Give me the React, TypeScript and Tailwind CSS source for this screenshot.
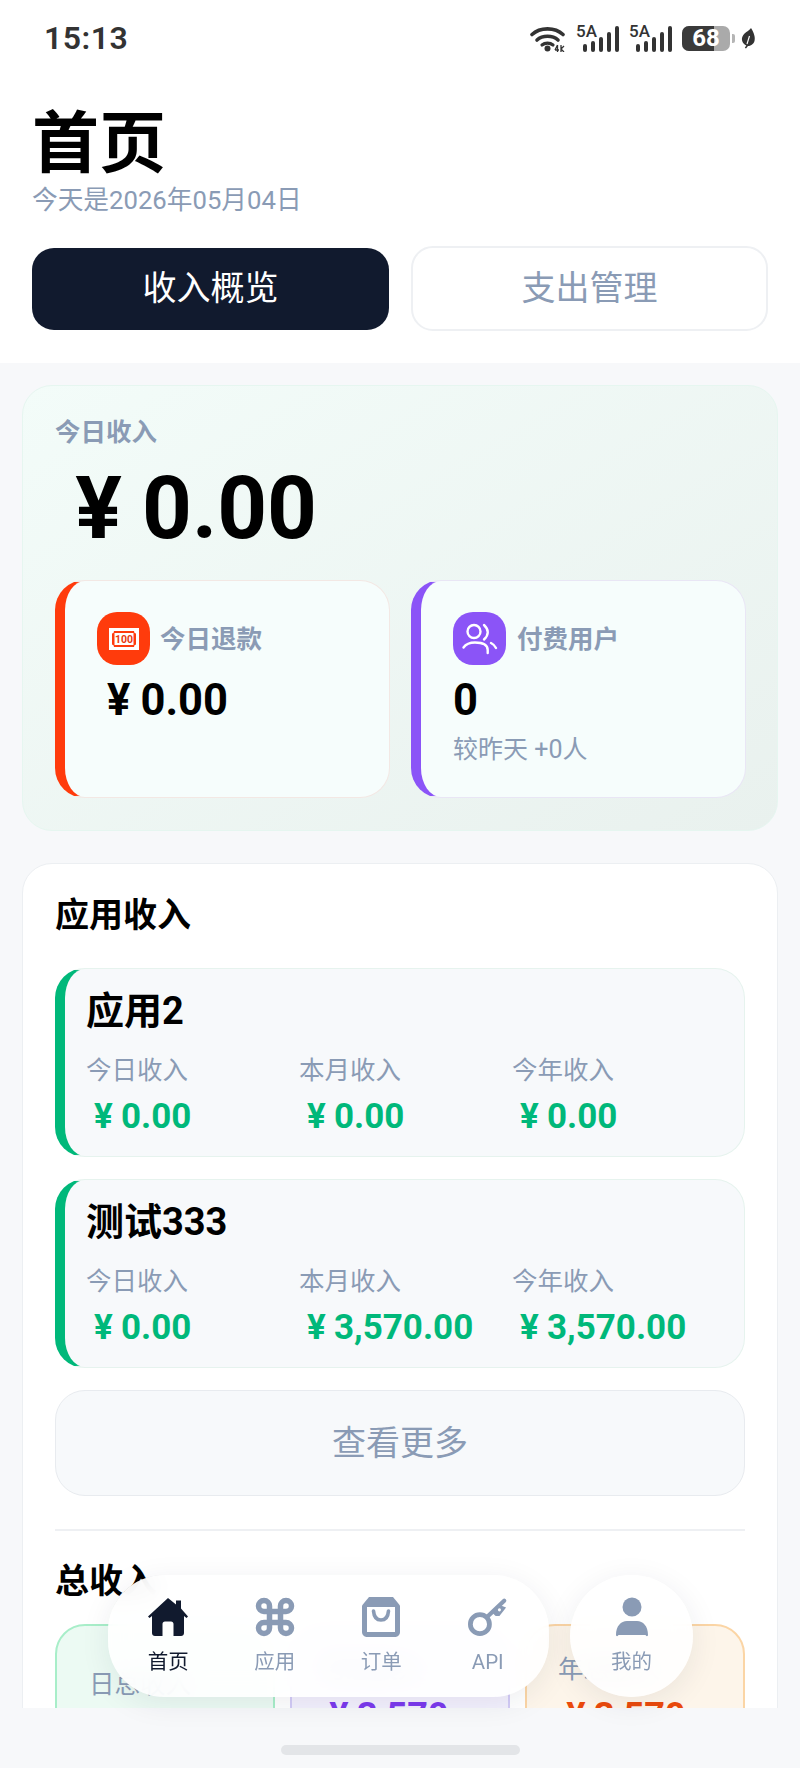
import { Command } from 'lucide-react';

const SLATE = "#8a9bb5";

const apps = [
  { name: "应用2", today: "0.00", month: "0.00", year: "0.00" },
  { name: "测试333", today: "0.00", month: "3,570.00", year: "3,570.00" },
];

function Yen() {
  return <span className="inline-block w-[1em] text-center">¥</span>;
}

function SignalBars() {
  return (
    <div className="flex items-end gap-[4px] h-[27px] ml-[6px]">
      <div className="w-[4px] h-[8px] rounded-full bg-[#333]" />
      <div className="w-[4px] h-[11px] rounded-full bg-[#333]" />
      <div className="w-[4px] h-[15px] rounded-full bg-[#333]" />
      <div className="w-[4px] h-[20px] rounded-full bg-[#333]" />
      <div className="w-[4px] h-[26px] rounded-full bg-[#333]" />
    </div>
  );
}

function Signal() {
  return (
    <div className="relative flex h-[27px] w-[43px] items-end justify-end">
      <span className="absolute left-0 top-[-2px] text-[17px] leading-[17px] font-medium text-[#333]">5A</span>
      <SignalBars />
    </div>
  );
}

function StatusBar() {
  return (
    <div className="h-[76px] flex items-center justify-between pl-[44px] pr-[44px] bg-white">
      <span className="text-[32px] leading-[40px] font-semibold text-[#333] tracking-[0.5px]">15:13</span>
      <div className="flex items-center h-[27px]">
        <svg width="36" height="27" viewBox="0 0 36 27" fill="none" className="mr-[10px]">
          <path d="M2 9.500C10 2 25 2 33 9.500" stroke="#333" strokeWidth="3.600" strokeLinecap="round" />
          <path d="M7 15C12.500 10 22.500 10 28 15" stroke="#333" strokeWidth="3.600" strokeLinecap="round" />
          <path d="M12 20C15 17.500 20 17.500 23 20" stroke="#333" strokeWidth="3.200" strokeLinecap="round" />
          <circle cx="17.500" cy="23.500" r="3" fill="#333" />
          <path d="M25 25H29M27.500 20L25 25M27.500 20V27M31 20V27M31 24L34 21M31 24L34 27" stroke="#333" strokeWidth="1.300" />
        </svg>
        <Signal />
        <div className="w-[10px]" />
        <Signal />
        <div className="relative ml-[10px] h-[25px] w-[48px] rounded-[7px] overflow-hidden bg-[#aaaaaa] flex items-center justify-center">
          <div className="absolute left-0 top-0 bottom-0 w-[32px] bg-[#3a3a3a]" />
          <span className="relative text-[24px] leading-[25px] font-bold text-white">68</span>
        </div>
        <div className="ml-[2px] w-[3px] h-[9px] rounded-r-[2px] bg-[#b5b5b5]" />
        <svg width="16" height="22" viewBox="0 0 16 22" className="ml-[5px]">
          <path d="M11 1C14 6 15.500 10 14.500 14C13.500 17.500 10.500 19 8 19L6 21.500L4.800 20.800L6.300 18.500C2.500 16.500 1 13 2.500 9.500C4 5.500 8.500 4.500 11 1Z" fill="#333" />
          <path d="M7 17L9.500 9" stroke="#fff" strokeWidth="1.200" />
        </svg>
      </div>
    </div>
  );
}

function BillIcon() {
  return (
    <svg width="30" height="22" viewBox="0 0 30 22">
      <rect width="30" height="22" fill="#fff" />
      <path d="M3 5.500Q5 5.500 5 3H25Q25 5.500 27 5.500V16.500Q25 16.500 25 19H5Q5 16.500 3 16.500Z" fill="#ff3b0c" />
      <rect x="5.500" y="5" width="19" height="12" fill="#fff" />
      <text x="15" y="15" textAnchor="middle" fontSize="10.500" fontWeight="700" fill="#e8390e">100</text>
    </svg>
  );
}

function UsersIcon() {
  return (
    <svg width="53" height="53" viewBox="0 0 53 53" fill="none" stroke="#fff" strokeWidth="2.400" strokeLinecap="round">
      <circle cx="21" cy="19.500" r="6.500" />
      <path d="M31 13C36 17.500 36 23 31 27.500" />
      <path d="M10.500 35.500C13 32 17 30.500 22 30.500C30 30.500 34.700 33 34.700 38V41" />
      <path d="M38 31C40 32 42 34 43 36" />
    </svg>
  );
}

function HomeIcon() {
  return (
    <svg width="40" height="38" viewBox="0 0 40 38" fill="#111a2e">
      <path d="M20 0L28 6.500V2.500H33V10.500L40 18.500L38.500 20L36 18V35C36 36.700 34.700 38 33 38H25.500V26C25.500 24.500 24.500 23.500 23 23.500H17C15.500 23.500 14.500 24.500 14.500 26V38H7C5.300 38 4 36.700 4 35V18L1.500 20L0 18.500Z" />
    </svg>
  );
}

function BagIcon() {
  return (
    <svg width="38" height="40" viewBox="0 0 38 40">
      <path d="M7 0H31L38 8.500V35C38 37.800 35.800 40 33 40H5C2.200 40 0 37.800 0 35V8.500Z" fill={SLATE} />
      <rect x="5" y="10" width="28" height="25" fill="#fff" />
      <path d="M11.500 14C12 20 15 23 19 23C23 23 26 20 26.500 14" fill="none" stroke={SLATE} strokeWidth="3.600" strokeLinecap="round" />
    </svg>
  );
}

function KeyIcon() {
  return (
    <svg width="42" height="40" viewBox="0 0 42 40" fill="none">
      <circle cx="12.500" cy="27.500" r="10" stroke={SLATE} strokeWidth="5" />
      <path d="M20 20L38 3" stroke={SLATE} strokeWidth="4.500" strokeLinecap="round" />
      <path d="M25 15L32 7L40 10L33 19L29 19Z" fill={SLATE} />
      <circle cx="33" cy="12.500" r="1.600" fill="#fff" />
    </svg>
  );
}

function PersonIcon() {
  return (
    <svg width="34" height="40" viewBox="0 0 34 40" fill={SLATE}>
      <circle cx="17" cy="10" r="9.500" />
      <path d="M1 38C1 29 6 24 12 24H22C28 24 33 29 33 38C33 39.500 31 39.500 30.500 38H3.500C3 39.500 1 39.500 1 38Z" />
    </svg>
  );
}

function NavItem({ icon, label, active }: { icon: React.ReactNode; label: string; active?: boolean }) {
  return (
    <div className="w-[106.5px] flex flex-col items-center">
      <div className="h-[40px] w-[40px] flex items-center justify-center">{icon}</div>
      <span className={`mt-[11px] text-[20.5px] leading-[28px] ${active ? "text-[#111a2e]" : "text-[#8a9bb5]"}`}>{label}</span>
    </div>
  );
}

function FloatingNav() {
  return (
    <div className="absolute left-[108px] top-[1575px] flex gap-[21px]">
      <div className="w-[441px] h-[122px] rounded-[56px] bg-white/90 backdrop-blur-md shadow-[0_6px_30px_rgba(30,40,70,0.08)] flex items-start pl-[7px] pt-[22px]">
        <NavItem icon={<HomeIcon />} label="首页" active />
        <NavItem icon={<Command size={44} strokeWidth={3} color={SLATE} className="shrink-0" />} label="应用" />
        <NavItem icon={<BagIcon />} label="订单" />
        <NavItem icon={<KeyIcon />} label="API" />
      </div>
      <div className="w-[123px] h-[122px] rounded-full bg-white/90 backdrop-blur-md shadow-[0_6px_30px_rgba(30,40,70,0.08)] flex items-start justify-center pt-[22px]">
        <NavItem icon={<PersonIcon />} label="我的" />
      </div>
    </div>
  );
}

function StatLabel({ text }: { text: string }) {
  return <div className="text-[25.5px] leading-[32px] text-[#8a9bb5]">{text}</div>;
}

export default function App() {
  return (
    <div className="relative w-[800px] h-[1768px] overflow-hidden bg-[#f7f8fa] font-['Roboto','Noto_Sans_CJK_SC',sans-serif] flex flex-col text-black">
      <StatusBar />

      <div className="bg-white h-[287px] px-[32px] shrink-0">
        <h1 className="pt-[32px] text-[67px] leading-[72px] font-bold">首页</h1>
        <div className="mt-[4px] text-[25.7px] leading-[32px] text-[#8a9bb5]">今天是2026年05月04日</div>
        <div className="mt-[30px] grid grid-cols-[357px_357px] gap-x-[22px] items-center">
          <div className="h-[82px] rounded-[22px] bg-[#111a2e] text-white text-[34px] flex items-center justify-center">收入概览</div>
          <div className="h-[85px] rounded-[22px] bg-white border-2 border-[#eef0f3] text-[#8a9bb5] text-[34px] flex items-center justify-center">支出管理</div>
        </div>
      </div>

      {/* scrolling area, cut off above the home bar */}
      <div className="h-[1345px] shrink-0 overflow-hidden px-[22px] pt-[22px]">
        <div className="h-[446px] rounded-[30px] border border-[#e6f6f0] bg-gradient-to-br from-[#f3fcf9] to-[#e9f1ee] px-[32px] pt-[30px]">
          <div className="text-[25.5px] leading-[32px] font-semibold text-[#8a9bb5]">今日收入</div>
          <div className="mt-[10px] text-[87px] leading-[100px] font-bold"><Yen />0.00</div>
          <div className="mt-[22px] grid grid-cols-[335px_335px] gap-x-[21px]">
            <div className="h-[218px] rounded-[30px] border border-[#f3e8e4] border-l-[10px] border-l-[#ff3b0c] bg-[#f6fdfc] pl-[32px] pt-[31px]">
              <div className="flex items-center gap-[10px]">
                <div className="w-[53px] h-[53px] rounded-[20px] bg-[#ff3b0c] flex items-center justify-center">
                  <BillIcon />
                </div>
                <span className="text-[25.5px] leading-[32px] font-semibold text-[#8a9bb5]">今日退款</span>
              </div>
              <div className="mt-[14px] text-[43.5px] leading-[44px] font-bold"><Yen />0.00</div>
            </div>
            <div className="h-[218px] rounded-[30px] border border-[#e9e6f5] border-l-[10px] border-l-[#8b54f7] bg-[#f6fdfc] pl-[32px] pt-[31px]">
              <div className="flex items-center gap-[11px]">
                <div className="w-[53px] h-[53px] rounded-[20px] bg-[#8b54f7] flex items-center justify-center">
                  <UsersIcon />
                </div>
                <span className="text-[25.5px] leading-[32px] font-semibold text-[#8a9bb5]">付费用户</span>
              </div>
              <div className="mt-[14px] text-[43.5px] leading-[44px] font-bold">0</div>
              <div className="mt-[11px] text-[25px] leading-[32px] text-[#8a9bb5]">较昨天 +0人</div>
            </div>
          </div>
        </div>

        <div className="mt-[32px] rounded-[30px] border border-[#eceff2] bg-white px-[32px] pt-[29px] pb-[40px]">
          <div className="text-[34px] leading-[44px] font-bold">应用收入</div>
          <div className="mt-[31px] flex flex-col gap-[22px]">
            {apps.map((app) => (
              <div
                key={app.name}
                className="h-[189px] rounded-[30px] border border-[#e6f3ee] border-l-[10px] border-l-[#00b87a] bg-[#f7f9fb] pl-[21px] pt-[20px]"
              >
                <div className="text-[38px] leading-[44px] font-bold">{app.name}</div>
                <div className="mt-[21px] grid grid-cols-[213px_213px_1fr]">
                  <StatLabel text="今日收入" />
                  <StatLabel text="本月收入" />
                  <StatLabel text="今年收入" />
                  <div className="mt-[11px] text-[35px] leading-[40px] font-bold text-[#00b87a]"><Yen />{app.today}</div>
                  <div className="mt-[11px] text-[35px] leading-[40px] font-bold text-[#00b87a]"><Yen />{app.month}</div>
                  <div className="mt-[11px] text-[35px] leading-[40px] font-bold text-[#00b87a]"><Yen />{app.year}</div>
                </div>
              </div>
            ))}
          </div>
          <div className="mt-[22px] h-[106px] rounded-[30px] border border-[#e8ebef] bg-[#f7f9fb] flex items-center justify-center text-[34px] text-[#8a9bb5]">
            查看更多
          </div>
          <div className="mt-[33px] h-[2px] bg-[#eef0f3]" />
          <div className="mt-[28px] text-[34px] leading-[44px] font-bold">总收入</div>
          <div className="mt-[21px] grid grid-cols-[220px_220px_220px] gap-x-[15px]">
            <div className="h-[200px] rounded-[30px] border-2 border-[#a8eec9] bg-[#ecfaf3] pl-[32px] pt-[42px]">
              <StatLabel text="日总收入" />
              <div className="mt-[11px] text-[36px] leading-[40px] font-bold text-[#00b87a]"><Yen />0.00</div>
            </div>
            <div className="h-[200px] rounded-[30px] border-2 border-[#d3cbf6] bg-[#f3f0fd] pl-[29px] pt-[27px]">
              <StatLabel text="月总收入" />
              <div className="mt-[11px] text-[36px] leading-[40px] font-bold text-[#7c3aed]"><Yen />3,570</div>
            </div>
            <div className="h-[200px] rounded-[30px] border-2 border-[#fbd5a5] bg-[#fdf5ea] pl-[31px] pt-[27px]">
              <StatLabel text="年总收入" />
              <div className="mt-[11px] text-[36px] leading-[40px] font-bold text-[#ea4a0c]"><Yen />3,570</div>
            </div>
          </div>
        </div>
      </div>

      <div className="flex-1 flex justify-center pt-[37px]">
        <div className="w-[239px] h-[10px] rounded-full bg-[#e3e5e8]" />
      </div>

      <FloatingNav />
    </div>
  );
}
